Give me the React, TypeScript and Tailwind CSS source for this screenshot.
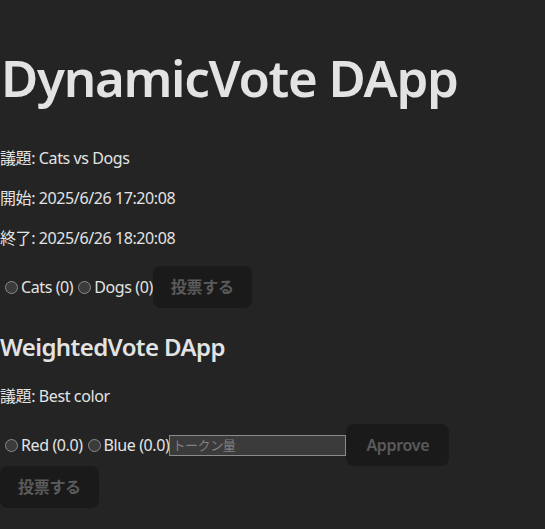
import React from 'react';

const font = "font-['Noto_Sans','Noto_Sans_CJK_JP',sans-serif]";

const Radio: React.FC<{ name: string; label: string }> = ({ name, label }) => (
  <label className="flex items-center">
    <input
      type="radio"
      name={name}
      className="appearance-none w-[13px] h-[13px] rounded-full border border-[#8a8a8a] bg-[#3b3b3b] ml-[5px] mr-[3px] mt-[1px]"
    />
    <span>{label}</span>
  </label>
);

const VoteButton: React.FC<{ children: React.ReactNode; className?: string }> = ({ children, className = 'px-[17px]' }) => (
  <button
    disabled
    className={`h-[42px] rounded-lg bg-[#1a1a1a] text-[#5a5a5a] text-base font-semibold border border-transparent tracking-[-0.3px] ${className}`}
  >
    {children}
  </button>
);

export default function App() {
  return (
    <div className={`min-h-screen bg-[#242424] text-[#e3e3e3] text-base leading-6 tracking-[-0.4px] ${font}`}>
      <div className="pt-[42px]">
        {/* DynamicVote */}
        <h1 className="text-[51px] leading-[70px] font-semibold mb-[34px] pl-[1px] tracking-[-1.3px]">
          DynamicVote DApp
        </h1>
        <p className="mb-4">議題: Cats vs Dogs</p>
        <p className="mb-4">開始: 2025/6/26 17:20:08</p>
        <p className="mb-4">終了: 2025/6/26 18:20:08</p>
        <div className="flex items-center">
          <Radio name="dyn" label="Cats (0)" />
          <Radio name="dyn" label="Dogs (0)" />
          <VoteButton>投票する</VoteButton>
        </div>

        {/* WeightedVote */}
        <h2 className="text-2xl leading-9 font-semibold mt-[21px] mb-[19px] tracking-[-0.6px]">WeightedVote DApp</h2>
        <p className="mb-4">議題: Best color</p>
        <div className="flex flex-wrap items-center">
          <Radio name="wt" label="Red (0.0)" />
          <Radio name="wt" label="Blue (0.0)" />
          <input
            type="text"
            placeholder="トークン量"
            className="w-[177px] h-[21px] border border-[#8a8a8a] bg-[#3b3b3b] px-[2px] text-[13px] text-[#e3e3e3] placeholder:text-[#808080] outline-none"
          />
          <VoteButton className="px-[19px]">Approve</VoteButton>
          <div className="basis-full h-0" />
          <VoteButton>投票する</VoteButton>
        </div>
      </div>
    </div>
  );
}
